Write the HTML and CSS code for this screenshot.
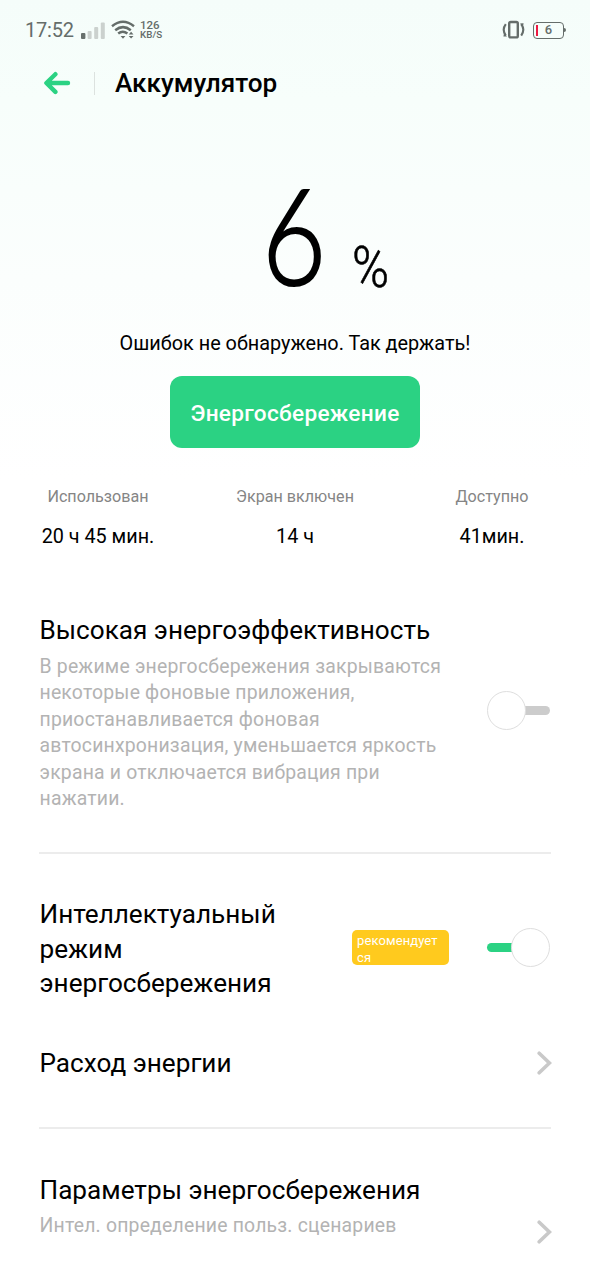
FILE: index.html
```html
<!DOCTYPE html>
<html lang="ru">
<head>
<meta charset="utf-8">
<title>Аккумулятор</title>
<link rel="stylesheet" href="styles.css">
</head>
<body>
<div class="screen">
  <div class="statusbar">
    <span class="clock">17:52</span>
    <svg class="signal" width="25" height="18" viewBox="0 0 25 18"><rect x="0" y="11" width="4.4" height="6" rx="1" fill="#68706d"/><rect x="6.6" y="9" width="4" height="8" rx="1" fill="#cbd1ce"/><rect x="13.2" y="5" width="4" height="12" rx="1" fill="#cbd1ce"/><rect x="19.8" y="0.5" width="4" height="16.5" rx="1" fill="#cbd1ce"/></svg>
    <svg class="wifi" width="25" height="20" viewBox="0 0 25 20" fill="none" stroke="#656d6a" stroke-width="2.5"><path d="M1 6.2Q12 -2.6 23 6.2M4.2 10.2Q12 4 19.8 10.2M7.2 13.6Q11.8 10 16.4 13.6"/><path d="M9.6 16h4.8L12 18.8zM17.7 14.4h4.8l-2.4-2.6zM17.7 16h4.8l-2.4 2.6z" fill="#656d6a" stroke="none"/></svg>
    <span class="speed"><span>126</span><span class="unit">KB/S</span></span>
    <svg class="vibrate" width="25" height="20" viewBox="0 0 25 20" fill="none" stroke="#656d6a"><rect x="8.2" y="2" width="8.6" height="15.4" rx="1.5" stroke-width="2.4"/><path d="M4.8 4.2Q0.6 9.8 4.8 15.6M20.2 4.2Q24.4 9.8 20.2 15.6" stroke-width="2.1"/><path d="M19 3.4l3.6-.2-.6 3.2zM6 16.4l-3.6.2.6-3.2z" fill="#656d6a" stroke="none"/></svg>
    <span class="battery"><i class="level"></i><b class="charge">6</b></span>
  </div>

  <header class="header">
    <svg class="back" width="28" height="24" viewBox="0 0 28 24" fill="none" stroke="#2bd283" stroke-width="4.4" stroke-linecap="round" stroke-linejoin="round"><path d="M12.4 3.2L3.4 12l9 8.9M3.8 12h21.2"/></svg>
    <i class="bar"></i>
    <h1 class="title">Аккумулятор</h1>
  </header>

  <section class="hero">
    <div class="percent"><span class="number">6</span><span class="sign">%</span></div>
    <p class="message">Ошибок не обнаружено. Так держать!</p>
    <button class="save">Энергосбережение</button>
  </section>

  <section class="stats">
    <div class="stat"><span class="label">Использован</span><span class="value">20 ч 45 мин.</span></div>
    <div class="stat"><span class="label">Экран включен</span><span class="value">14 ч</span></div>
    <div class="stat"><span class="label">Доступно</span><span class="value">41мин.</span></div>
  </section>

  <section class="row efficiency">
    <div class="text">
      <h2 class="name">Высокая энергоэффективность</h2>
      <p class="desc">В режиме энергосбережения закрываются<br>некоторые фоновые приложения,<br>приостанавливается фоновая<br>автосинхронизация, уменьшается яркость<br>экрана и отключается вибрация при<br>нажатии.</p>
    </div>
    <span class="toggle"><i class="knob"></i></span>
  </section>

  <section class="row smart">
    <h2 class="name">Интеллектуальный<br>режим<br>энергосбережения</h2>
    <span class="badge">рекомендует<br>ся</span>
    <span class="toggle on"><i class="knob"></i></span>
  </section>

  <section class="row usage">
    <h2 class="name">Расход энергии</h2>
    <svg class="chevron" width="16" height="24" viewBox="0 0 16 24"><path d="M2.2 2.2L12.4 12 2.2 21.8"/></svg>
  </section>

  <section class="row params">
    <div class="text">
      <h2 class="name">Параметры энергосбережения</h2>
      <p class="desc">Интел. определение польз. сценариев</p>
    </div>
    <svg class="chevron" width="16" height="24" viewBox="0 0 16 24"><path d="M2.2 2.2L12.4 12 2.2 21.8"/></svg>
  </section>
</div>
</body>
</html>
```

FILE: styles.css
```css
* { box-sizing: border-box; margin: 0; padding: 0; }
body { font-family: Roboto, "Noto Sans", sans-serif; color: #000; background: #fff; }
.screen {
  width: 590px; height: 1280px; overflow: hidden;
  display: flex; flex-direction: column;
  background: linear-gradient(#f5fdfa 0, #f7fefb 100px, #fbfefd 280px, #fff 480px);
}
.statusbar { height: 60px; padding: 0 24px 0 25px; display: flex; align-items: center; color: #656d6a; }
.clock { width: 56px; font-size: 20px; letter-spacing: -0.2px; line-height: 24px; }
.signal { margin-top: 1px; }
.wifi { margin-left: 5px; margin-top: -1px; }
.speed { display: flex; flex-direction: column; margin-left: 4px; margin-top: -2px; font-size: 11.5px; line-height: 10px; font-weight: 500; }
.unit { font-size: 9.8px; line-height: 9px; }
.vibrate { margin-left: auto; }
.battery { position: relative; width: 31px; height: 17px; margin-left: 7px; margin-right: 2px; border: 1.5px solid #656d6a; border-radius: 4px; display: flex; align-items: center; justify-content: center; }
.battery::after { content: ""; position: absolute; right: -3px; top: 5px; width: 2px; height: 4px; background: #656d6a; border-radius: 0 2px 2px 0; }
.level { position: absolute; left: 2px; top: 2px; width: 2px; height: 11px; background: #ed1941; }
.charge { font-size: 13px; line-height: 14px; font-weight: 500; }
.header { height: 46px; padding-left: 43px; display: flex; align-items: center; }
.bar { width: 1px; height: 23px; margin-left: 23px; background: #dce2df; }
.title { margin-left: 20px; font-size: 26.15px; line-height: 30px; font-weight: 500; }
.hero { height: 364px; display: flex; flex-direction: column; align-items: center; }
.percent { width: 590px; height: 205px; display: flex; align-items: baseline; }
.number { width: 91px; margin-left: 262px; font: 300 135px/254px Lato, sans-serif; -webkit-text-stroke: 2.2px #000; transform: scaleX(.82); transform-origin: left; }
.sign { margin-left: -1px; font: 300 57px/60px Roboto, sans-serif; -webkit-text-stroke: .6px #000; transform: translateY(2px) scaleX(.88); transform-origin: left; }
.message { margin-top: 21px; font-size: 19.85px; line-height: 24px; }
.save { width: 250px; height: 72px; margin-top: 20px; padding-top: 3px; border: 0; border-radius: 12px; background: #2bd283; color: #fff; font: 500 22.6px/28px Roboto, sans-serif; letter-spacing: .3px; }
.stats { height: 124px; display: grid; grid-template-columns: 196px 198px 196px; padding-top: 17px; }
.stat { display: flex; flex-direction: column; align-items: center; gap: 18px; }
.label { font-size: 16.15px; line-height: 20px; color: #858585; }
.value { font-size: 19.8px; line-height: 24px; }
.row { margin: 0 39px; display: flex; align-items: center; }
.name { padding-left: .5px; font-size: 26.15px; line-height: 34.5px; font-weight: 400; white-space: nowrap; }
.desc { padding-left: .5px; font-size: 19.4px; letter-spacing: .2px; line-height: 26.4px; color: #b3b3b3; white-space: nowrap; }
.efficiency { height: 260px; border-bottom: 2px solid #ececec; padding-top: 19px; align-items: flex-start; }
.efficiency .desc { margin-top: 6.4px; }
.toggle { position: relative; width: 63px; height: 39px; margin-left: auto; margin-right: 1px; flex: none; display: flex; align-items: center; }
.toggle::before { content: ""; width: 50px; height: 9px; margin-left: 13px; border-radius: 5px; background: #ccc; }
.toggle.on::before { margin-left: 0; background: #2bd283; }
.knob { position: absolute; left: 0; top: 0; width: 39px; height: 39px; border-radius: 50%; background: #fff; border: 1px solid #dedede; }
.on .knob { left: 24px; }
.efficiency .toggle { margin-top: 78px; }
.smart { height: 186px; padding-top: 4px; }
.badge { margin-left: auto; margin-top: -4px; width: 97px; height: 35px; padding: 2px 5px; border-radius: 5px; background: #ffca1e; color: #fff; font-size: 13px; line-height: 17px; letter-spacing: .1px; }
.smart .toggle { margin-left: 38px; margin-top: -4px; }
.usage { height: 89px; border-bottom: 2px solid #ececec; align-items: flex-start; padding-top: 6px; }
.chevron { margin-left: auto; margin-right: -2px; fill: none; stroke: #c9c9c9; stroke-width: 3.6; stroke-linecap: round; stroke-linejoin: miter; }
.usage .chevron { margin-top: 5px; }
.params { height: 130px; padding-top: 43.5px; align-items: flex-start; }
.params .desc { margin-top: 6px; }
.params .chevron { margin-top: 47px; }
```
